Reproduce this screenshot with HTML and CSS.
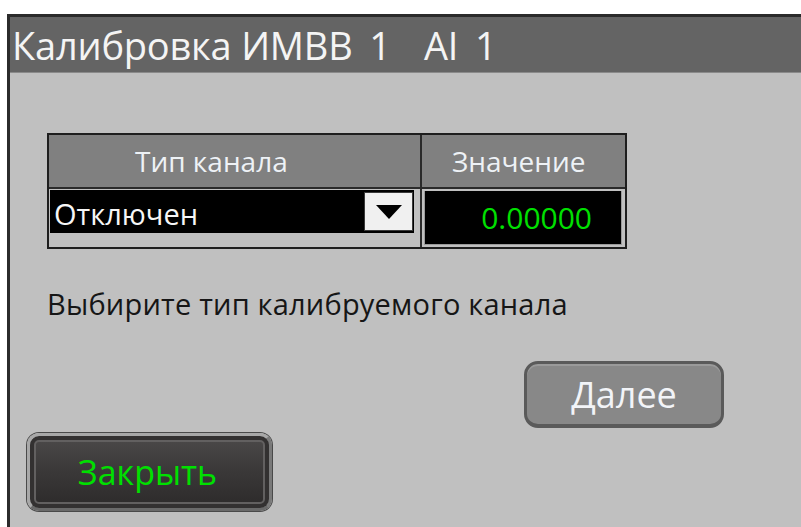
FILE: index.html
```html
<!DOCTYPE html>
<html lang="ru">
<head>
<meta charset="utf-8">
<title>Калибровка ИМВВ 1 AI 1</title>
<link rel="stylesheet" href="styles.css">
</head>
<body>
<div class="window">
  <div class="titlebar"><span class="title">Калибровка <span class="title-tail">ИМВВ 1&nbsp; AI 1</span></span></div>
  <div class="content">
    <div class="grid">
      <div class="head head-type">Тип канала</div>
      <div class="head head-value">Значение</div>
      <div class="cell cell-type">
        <div class="combo">
          <span class="combo-text">Отключен</span>
          <span class="combo-btn">
            <svg width="26" height="14" viewBox="0 0 26 14"><polygon points="0,0 26,0 13,14" fill="#000"/></svg>
          </span>
        </div>
      </div>
      <div class="cell cell-value"><div class="value">0.00000</div></div>
    </div>
    <p class="hint">Выбирите тип калибруемого канала</p>
    <div class="next-row"><button class="btn-next">Далее</button></div>
    <div class="close-row"><button class="btn-close">Закрыть</button></div>
  </div>
</div>
</body>
</html>
```
FILE: styles.css
```css
html, body {
  margin: 0;
  padding: 0;
  background: #ffffff;
  overflow: hidden;
}
body {
  width: 801px;
  height: 527px;
  font-family: "Open Sans", "Noto Sans", sans-serif;
}
.window {
  margin: 14px 0 0 7px;
  height: 513px;
  border-top: 3px solid #2b2b2b;
  border-left: 3px solid #2b2b2b;
  background: #c0c0c0;
  box-sizing: border-box;
  display: flex;
  flex-direction: column;
}
.titlebar {
  height: 56px;
  flex: none;
  background: #646464;
  border-bottom: 1px solid #8a8a8a;
  box-sizing: border-box;
  display: flex;
  align-items: center;
  padding-left: 2px;
  overflow: hidden;
}
.title {
  color: #f4f4f4;
  font-size: 38px;
  white-space: pre;
  letter-spacing: -0.2px;
}
.title-tail {
  word-spacing: 7px;
}
.content {
  flex: 1;
  padding: 60px 0 0 37px;
  display: flex;
  flex-direction: column;
}
.grid {
  width: 580px;
  box-sizing: border-box;
  border: 2px solid #1e1e1e;
  display: grid;
  grid-template-columns: 373px 1fr;
  grid-template-rows: 54px 58px;
  background: #c0c0c0;
}
.head {
  background: #808080;
  color: #eef2f6;
  font-size: 28px;
  display: flex;
  align-items: center;
  border-bottom: 2px solid #2a2a2a;
}
.head-type {
  border-right: 2px solid #2a2a2a;
  padding-left: 86px;
}
.head-value {
  padding-left: 30px;
}
.cell-type {
  border-right: 2px solid #2a2a2a;
  padding: 1px 6px 0 1px;
}
.combo {
  height: 43px;
  background: #000;
  display: flex;
  align-items: center;
  justify-content: space-between;
  padding-left: 4px;
}
.combo-text {
  color: #f6f6f6;
  font-size: 29px;
  margin-top: 3px;
}
.combo-btn {
  width: 47px;
  height: 37px;
  background: #f0f0f0;
  border: 1px solid #3a3a3a;
  display: flex;
  align-items: center;
  justify-content: center;
  margin-right: 1px;
}
.cell-value {
  padding: 2px 3px 2px 2px;
}
.value {
  height: 100%;
  background: #000;
  border: 1px solid #9a9a9a;
  border-top: none;
  box-sizing: border-box;
  color: #00e000;
  font-size: 30px;
  display: flex;
  align-items: center;
  justify-content: flex-end;
  padding-right: 29px;
}
.hint {
  margin: 35px 0 0;
  color: #161616;
  font-size: 29px;
  line-height: 40px;
  letter-spacing: 0.2px;
}
.next-row {
  display: flex;
  margin-top: 37px;
  padding-left: 477px;
}
.btn-next {
  width: 200px;
  height: 67px;
  border-radius: 14px;
  border: 3px solid #5a5a5a;
  border-bottom-width: 4px;
  background: #888888;
  color: #f2f4f8;
  font-family: inherit;
  font-size: 36px;
  box-shadow: inset 0 2px 0 #9a9a9a;
  padding: 0;
}
.close-row {
  display: flex;
  margin-top: 5px;
  margin-left: -20px;
}
.btn-close {
  width: 245px;
  height: 78px;
  border-radius: 12px;
  border: 3px solid #a8a8a8;
  border-bottom-color: #6a6a6a;
  border-right-color: #7a7a7a;
  background: linear-gradient(#4c4a4a, #3a3838 50%, #2c2a2a);
  box-shadow: inset 0 0 0 4px #333131, inset 0 0 0 6px #626060, 0 0 0 1px #4a4a4a;
  color: #00e000;
  font-family: inherit;
  font-size: 34px;
  padding: 0 4px 0 0;
}
```
